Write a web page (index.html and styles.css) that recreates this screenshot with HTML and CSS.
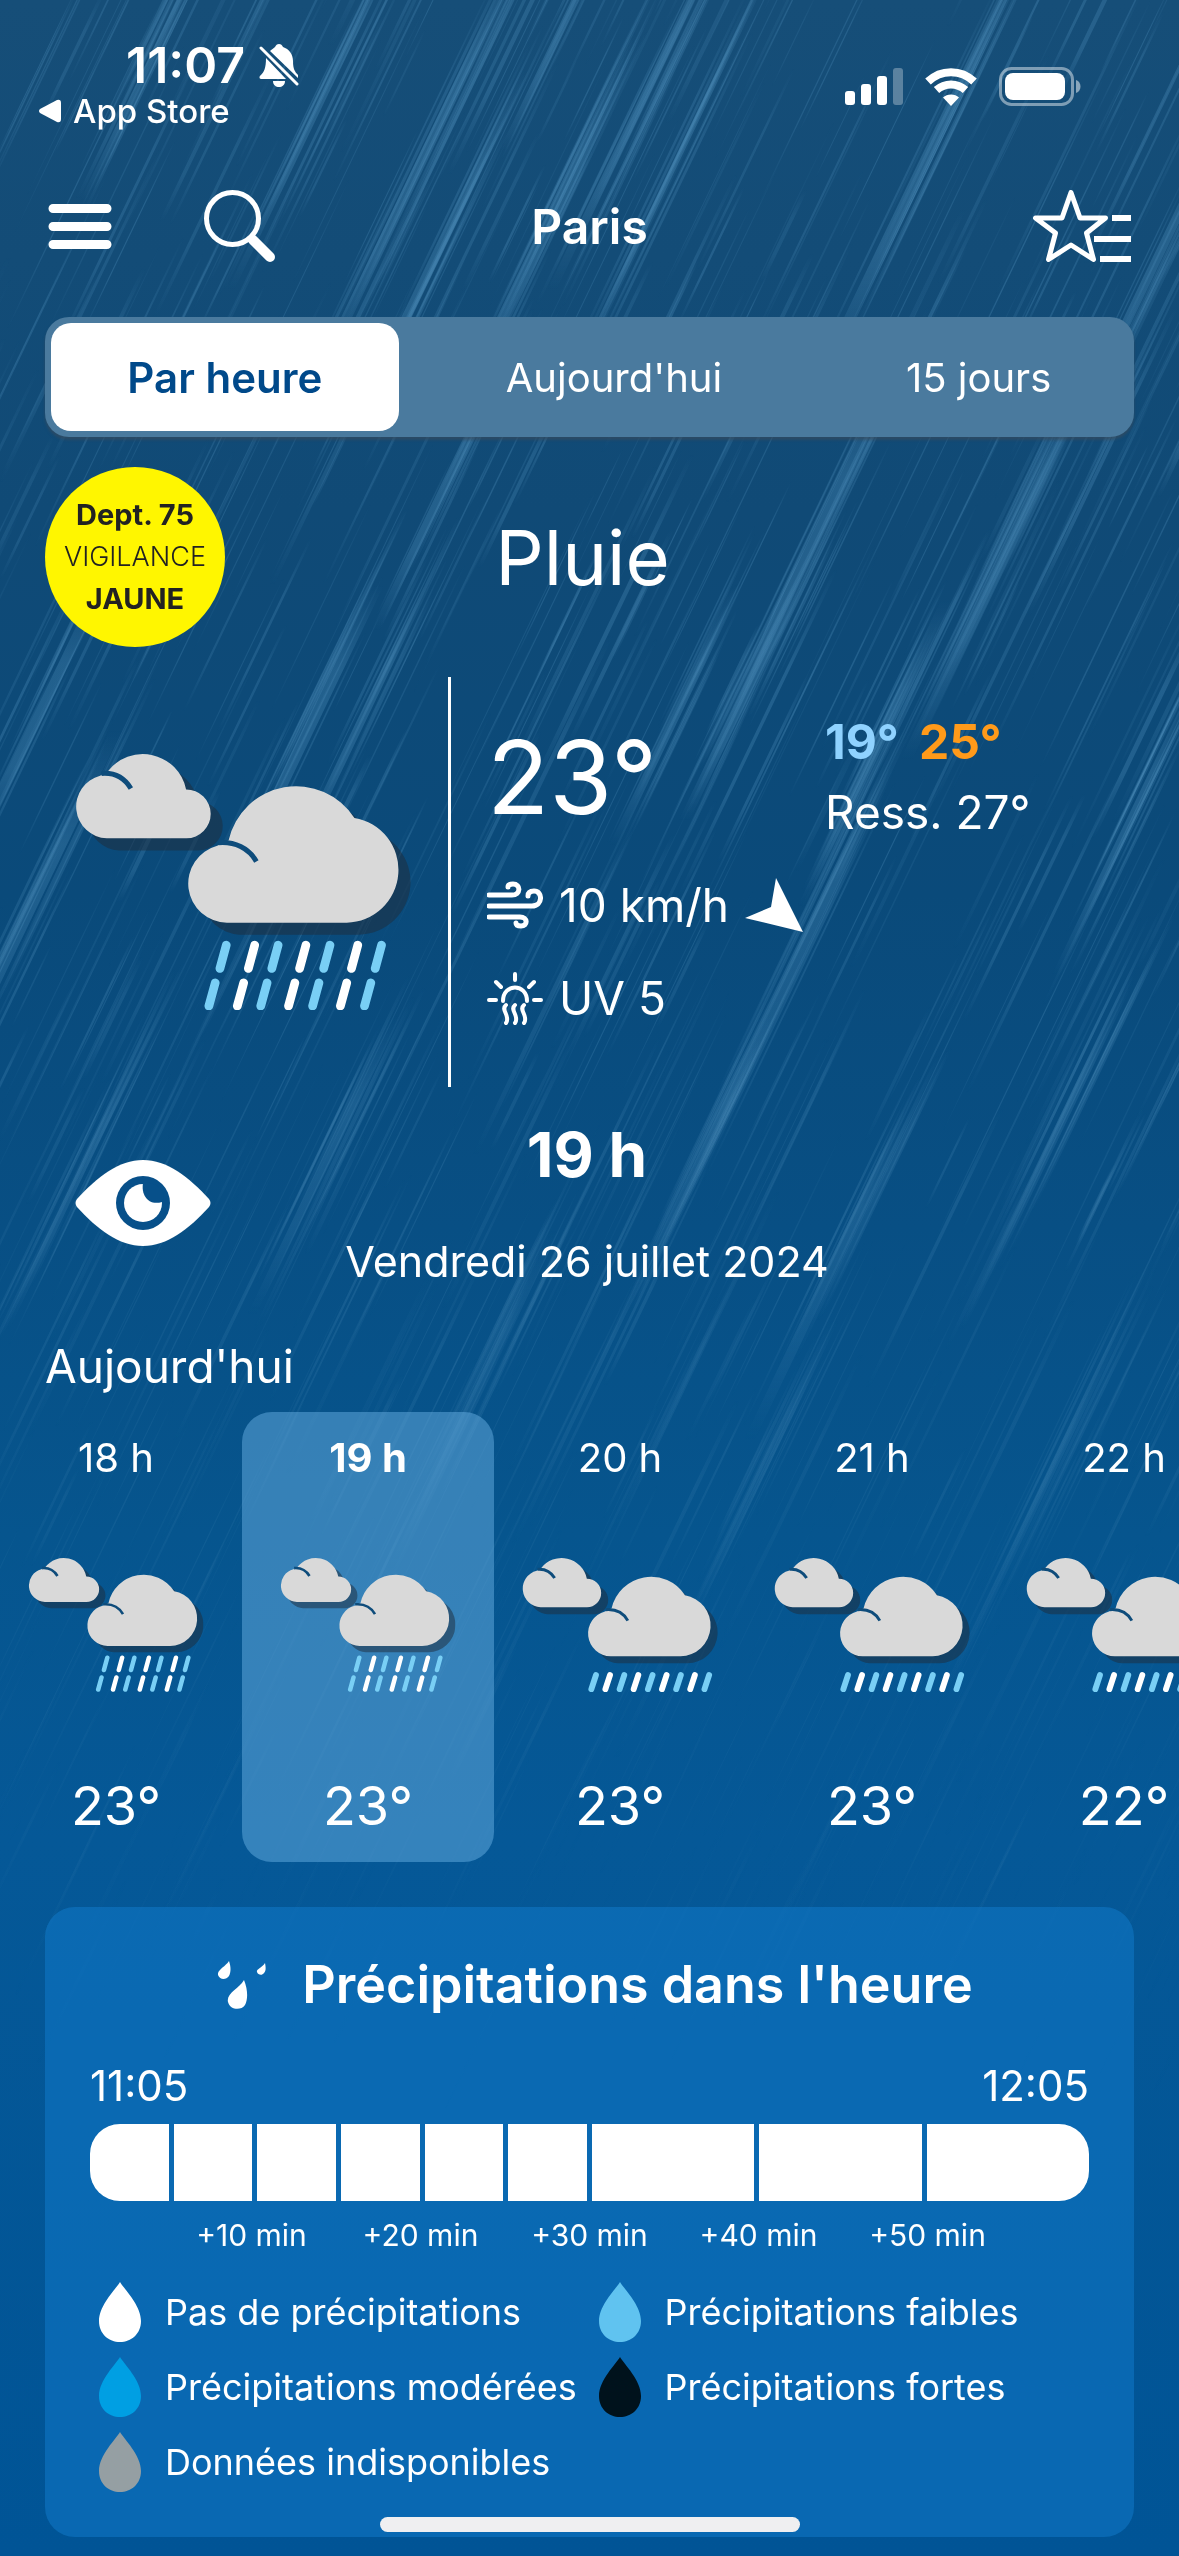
FILE: index.html
```html
<!DOCTYPE html>
<html lang="fr">
<head>
    <meta charset="UTF-8">
    <meta name="viewport" content="width=device-width, initial-scale=1.0">
    <title>Paris - Par heure</title>
    <link rel="stylesheet" href="styles.css">
</head>
<body>
    <!-- shared drawings -->
    <svg class="defs" width="0" height="0" aria-hidden="true">
        <symbol id="clouds" viewBox="225 279 1004 767">
            <g class="shadow" transform="translate(36 36)">
                <path d="M320 531H558A73 73 0 0 0 557 385A132 132 0 0 0 322 332L300 344A95 95 0 0 0 320 531Z"/>
                <path d="M679 783H1037A157.6 157.6 0 0 0 1060 470A207 207 0 0 0 684 537L650 555A117 117 0 0 0 679 783Z"/>
            </g>
            <g class="cloud">
                <path d="M320 531H558A73 73 0 0 0 557 385A132 132 0 0 0 322 332L300 344A95 95 0 0 0 320 531Z"/>
                <path d="M679 783H1037A157.6 157.6 0 0 0 1060 470A207 207 0 0 0 684 537L650 553A117 117 0 0 0 679 783Z"/>
            </g>
            <g class="cut">
                <path d="M304 337C340 334 372 349 392 382"/>
                <path d="M654 544C702 540 744 560 767 600"/>
            </g>
        </symbol>
        <symbol id="rain-strong" viewBox="225 279 1004 767">
            <use href="#clouds" x="225" y="279" width="1004" height="767"/>
            <g class="drops" stroke-width="26">
                <path class="blue" d="M677 850l-19 70M832 850l-19 70M987 850l-19 70M1141 850l-19 70M644 963l-19 69M799 963l-19 69M954 963l-19 69M1109 963l-19 69"/>
                <path class="white" d="M762 850l-19 70M915 850l-19 70M1070 850l-19 70M729 963l-19 69M882 963l-19 69M1037 963l-19 69"/>
            </g>
        </symbol>
        <symbol id="rain-light" viewBox="225 279 1004 687">
            <use href="#clouds" x="225" y="279" width="1004" height="767"/>
            <g class="drops" stroke-width="30">
                <path class="blue" d="M604 879l-24 73M749 879l-24 73M894 879l-24 73M1039 879l-24 73M1184 879l-24 73"/>
                <path class="white" d="M676 879l-24 73M821 879l-24 73M966 879l-24 73M1111 879l-24 73"/>
            </g>
        </symbol>
        <symbol id="drop" viewBox="0 0 42 60">
            <path d="M21 0C25 7 42 23 42 39C42 52 32 60 21 60C10 60 0 52 0 39C0 23 17 7 21 0Z"/>
        </symbol>
    </svg>

    <canvas class="rain" id="rain"></canvas>

    <header class="status">
        <div class="status-left">
            <div class="clock">
                11:07
                <svg width="40" height="43" viewBox="0 0 40 43">
                    <path fill="#fff" d="M11 7C13 5 15 4 16 3C17 1 18 0 20 0C22 0 23 1 24 3C30 5 34 10 34 17C34 25 36 28 39 31V34Z"/>
                    <path fill="#fff" d="M7 14L27 35H2C0 35 0 32 2 31C5 28 7 24 7 14ZM14 37H26C26 41 23 43 20 43C17 43 14 41 14 37Z"/>
                    <path stroke="#fff" stroke-width="3" stroke-linecap="round" d="M2 4L38 40"/>
                </svg>
            </div>
            <a class="back" href="#">
                <svg width="22" height="24" viewBox="0 0 22 24"><path fill="#fff" d="M1 10L18 1Q22 0 22 4V20Q22 24 18 23L1 14Q-1 12 1 10Z"/></svg>
                App Store
            </a>
        </div>
        <div class="status-right">
            <svg width="58" height="38" viewBox="0 0 58 38" fill="#fff">
                <rect x="0" y="23" width="10" height="14" rx="3"/>
                <rect x="16" y="16" width="10" height="21" rx="3"/>
                <rect x="32" y="8" width="10" height="29" rx="3"/>
                <rect x="48" y="0" width="10" height="37" rx="3" opacity=".3"/>
            </svg>
            <svg width="52" height="38" viewBox="0 0 52 38" fill="none" stroke="#fff">
                <path stroke-width="8" d="M3 13.500C16 1 36 1 49 13.500"/>
                <path stroke-width="8" d="M11.500 22C20 14.500 32 14.500 40.500 22"/>
                <path fill="#fff" stroke="none" d="M26 38L18 29.500C22 25.500 30 25.500 34 29.500Z"/>
            </svg>
            <svg width="83" height="40" viewBox="0 0 83 40">
                <rect x="1.500" y="1.500" width="72" height="36" rx="11" fill="none" stroke="#fff" stroke-width="3" opacity=".45"/>
                <rect x="6" y="6" width="60" height="27" rx="8" fill="#fff"/>
                <path fill="#fff" opacity=".5" d="M77 13C83 15 83 24 77 26Z"/>
            </svg>
        </div>
    </header>

    <nav class="nav">
        <div class="nav-left">
            <button type="button" aria-label="Menu">
                <svg width="64" height="72" viewBox="0 0 64 72"><path stroke="#fff" stroke-width="9" stroke-linecap="round" d="M5 18.500H59M5 36.500H59M5 54.500H59"/></svg>
            </button>
            <button type="button" aria-label="Rechercher">
                <svg width="72" height="72" viewBox="0 0 72 72" fill="none" stroke="#fff">
                    <circle cx="28.500" cy="28.500" r="26" stroke-width="5"/>
                    <path stroke-width="10" stroke-linecap="round" d="M49 50L66 67"/>
                </svg>
            </button>
        </div>
        <h1>Paris</h1>
        <div class="nav-right">
            <button type="button" aria-label="Favoris">
                <svg width="98" height="72" viewBox="0 0 98 72" fill="none" stroke="#fff">
                    <path stroke-width="5" stroke-linejoin="round" d="M38 2.500L47 28H72.500L53.500 43L60.500 69.500L38 55L15.500 69.500L22.500 43L2.500 28H29Z"/>
                    <path stroke-width="6" d="M79 28H98M61 49H98M67 69H98"/>
                </svg>
            </button>
        </div>
    </nav>

    <div class="tabs" role="tablist">
        <button class="tab active" type="button" role="tab" aria-selected="true">Par heure</button>
        <button class="tab" type="button" role="tab">Aujourd'hui</button>
        <button class="tab" type="button" role="tab">15 jours</button>
    </div>

    <main>
        <section class="summary">
            <a class="vigilance" href="#">
                <strong>Dept. 75</strong>
                <span>VIGILANCE</span>
                <strong>JAUNE</strong>
            </a>
            <h2>Pluie</h2>
        </section>

        <section class="now">
            <div class="now-icon">
                <svg viewBox="225 279 1004 767"><use href="#rain-strong" x="225" y="279" width="1004" height="767"/></svg>
            </div>
            <div class="now-data">
                <div class="measures">
                    <div class="temp">23°</div>
                    <div class="measure">
                        <svg width="56" height="48" viewBox="0 0 56 48" fill="none" stroke="#fff" stroke-width="5" stroke-linecap="round">
                            <path d="M2 14H25C34 14 34 3 26 3C23 3 21 4 21 6"/>
                            <path d="M2 25H45C56 25 56 10 47 10C43 10 41 12 41 15"/>
                            <path d="M2 36H33C41 36 41 45 34 45C31 45 29 44 29 42"/>
                        </svg>
                        <span>10 km/h</span>
                        <svg width="58" height="54" viewBox="0 0 58 54"><path fill="#fff" d="M31 0L58 54L0 40L26 29Z"/></svg>
                    </div>
                    <div class="measure">
                        <svg width="56" height="53" viewBox="0 0 56 53" fill="none" stroke="#fff" stroke-width="4" stroke-linecap="round">
                            <path d="M2 28H9M47 28H54M28 2V8M9 10L14 15M47 10L42 15"/>
                            <path d="M16 29C16 11 40 11 40 29"/>
                            <path d="M19 33C13 38 24 44 19 51M28 33C22 38 33 44 28 51M37 33C31 38 42 44 37 51"/>
                        </svg>
                        <span>UV 5</span>
                    </div>
                </div>
                <div class="range">
                    <div class="minmax"><span class="min">19°</span><span class="max">25°</span></div>
                    <div>Ress. 27°</div>
                </div>
            </div>
        </section>

        <section class="moment">
            <button class="eye" type="button" aria-label="Observer">
                <svg width="136" height="88" viewBox="0 0 136 88">
                    <path fill="#fff" d="M2 40C22 18 44 1 68 1C92 1 114 18 134 40Q137 44 134 48C114 70 92 87 68 87C44 87 22 70 2 48Q-1 44 2 40Z"/>
                    <circle cx="68" cy="44" r="27" fill="#07508a"/>
                    <circle cx="68" cy="44" r="19" fill="#fff"/>
                    <path fill="#07508a" d="M68 24C66 36 73 47 87 43C93 33 82 22 68 24Z"/>
                </svg>
            </button>
            <div class="date">
                <h3>19 h</h3>
                <p>Vendredi 26 juillet 2024</p>
            </div>
        </section>

        <h4 class="day">Aujourd'hui</h4>
        <div class="hours">
            <button class="hour" type="button">
                <span class="hour-label">18 h</span>
                <svg class="strong" viewBox="225 279 1004 767"><use href="#rain-strong" x="225" y="279" width="1004" height="767"/></svg>
                <span class="hour-temp">23°</span>
            </button>
            <button class="hour selected" type="button">
                <span class="hour-label">19 h</span>
                <svg class="strong" viewBox="225 279 1004 767"><use href="#rain-strong" x="225" y="279" width="1004" height="767"/></svg>
                <span class="hour-temp">23°</span>
            </button>
            <button class="hour" type="button">
                <span class="hour-label">20 h</span>
                <svg class="light" viewBox="225 279 1004 687"><use href="#rain-light" x="225" y="279" width="1004" height="687"/></svg>
                <span class="hour-temp">23°</span>
            </button>
            <button class="hour" type="button">
                <span class="hour-label">21 h</span>
                <svg class="light" viewBox="225 279 1004 687"><use href="#rain-light" x="225" y="279" width="1004" height="687"/></svg>
                <span class="hour-temp">23°</span>
            </button>
            <button class="hour" type="button">
                <span class="hour-label">22 h</span>
                <svg class="light" viewBox="225 279 1004 687"><use href="#rain-light" x="225" y="279" width="1004" height="687"/></svg>
                <span class="hour-temp">22°</span>
            </button>
        </div>

        <section class="card">
            <h3>
                <svg width="48" height="48" viewBox="0 0 48 48" fill="#fff">
                    <path d="M11 0C13 6 13 11 11 15C8 19 2 19 0 14C-1 9 7 6 11 0Z"/>
                    <path d="M26 19C30 29 30 38 27 44C23 50 12 49 10 41C8 32 21 28 26 19Z"/>
                    <path d="M47 2C48 7 48 10 46 12C44 15 40 14 39 11C38 8 44 7 47 2Z"/>
                </svg>
                Précipitations dans l'heure
            </h3>
            <div class="times"><span>11:05</span><span>12:05</span></div>
            <div class="bar">
                <i></i><i></i><i></i><i></i><i></i><i></i>
                <i class="wide"></i><i class="wide"></i><i class="wide"></i>
            </div>
            <div class="steps">
                <span>+10 min</span><span>+20 min</span><span>+30 min</span><span>+40 min</span><span>+50 min</span>
            </div>
            <ul class="legend">
                <li class="none"><svg><use href="#drop"/></svg>Pas de précipitations</li>
                <li class="weak"><svg><use href="#drop"/></svg>Précipitations faibles</li>
                <li class="medium"><svg><use href="#drop"/></svg>Précipitations modérées</li>
                <li class="heavy"><svg><use href="#drop"/></svg>Précipitations fortes</li>
                <li class="unknown"><svg><use href="#drop"/></svg>Données indisponibles</li>
            </ul>
        </section>
    </main>

    <div class="home-bar"></div>
    <script src="rain.js"></script>
</body>
</html>
```
FILE: styles.css
```css
*{
    margin: 0;
    padding: 0;
    box-sizing: border-box;
}
body{
    position: relative;
    min-height: 100vh;
    padding-bottom: 19px;
    overflow-x: hidden;
    font-family: Inter, "Liberation Sans", sans-serif;
    color: white;
    background: linear-gradient(#164e78 0%, #104a76 20%, #0a4a7a 35%, #084f84 48%, #06558e 60%, #055897 72%, #005496 100%);
}
button{
    border: 0;
    background: none;
    color: inherit;
    font-family: inherit;
}
a{
    color: inherit;
    text-decoration: none;
}
svg{
    display: block;
    flex-shrink: 0;
}
.defs{
    position: absolute;
}
.rain{
    position: absolute;
    top: 0;
    left: 0;
    width: 100%;
    height: 100%;
    z-index: -1;
}
.shadow{
    fill: rgb(32, 44, 58);
    opacity: .5;
}
.cloud{
    fill: #d9d9d9;
}
.cut{
    fill: none;
    stroke: #0e4c7b;
    stroke-width: 15;
}
.drops{
    fill: none;
    stroke-linecap: round;
}
.blue{
    stroke: #79cff5;
}
.white{
    stroke: white;
}

/* status bar */
.status{
    display: flex;
    justify-content: space-between;
    align-items: flex-end;
    padding: 37px 97px 0 39px;
}
.clock{
    display: flex;
    align-items: center;
    gap: 14px;
    padding-left: 87px;
    font-size: 50px;
    font-weight: 600;
    line-height: 56px;
}
.back{
    display: flex;
    align-items: center;
    gap: 12px;
    font-size: 33px;
    font-weight: 500;
    line-height: 36px;
}
.status-right{
    display: flex;
    align-items: center;
    gap: 22px;
    padding-bottom: 22px;
}

/* top navigation */
.nav{
    display: grid;
    grid-template-columns: 1fr auto 1fr;
    align-items: center;
    margin-top: 61px;
    padding: 0 48px;
}
.nav-left{
    display: flex;
    gap: 92px;
}
.nav-right{
    display: flex;
    justify-content: flex-end;
}
.nav h1{
    font-size: 48px;
    font-weight: 600;
}
.tabs{
    display: grid;
    grid-template-columns: 348fr 431fr 299fr;
    height: 120px;
    margin: 55px 45px 0;
    padding: 6px;
    border-radius: 24px;
    background: #4a7a9e;
    box-shadow: 0 3px 3px rgba(60, 75, 90, .6);
}
.tab{
    border-radius: 20px;
    font-size: 40px;
}
.tab.active{
    background: white;
    color: #00498a;
    font-size: 42px;
    font-weight: 600;
}

/* weather label */
.summary{
    display: grid;
    grid-template-columns: 180px 1fr 194px;
    align-items: center;
    margin: 30px 45px 0;
}
.vigilance{
    display: flex;
    flex-direction: column;
    align-items: center;
    justify-content: center;
    height: 180px;
    border-radius: 50%;
    background: #fff600;
    color: #222;
    font-size: 29px;
    line-height: 42px;
}
.vigilance span{
    font-size: 27px;
    font-weight: 300;
}
.summary h2{
    text-align: center;
    font-size: 76px;
    font-weight: 400;
}

/* current conditions */
.now{
    display: grid;
    grid-template-columns: 403px 1fr;
    margin: 30px 45px 0;
}
.now-icon{
    display: flex;
    align-items: center;
    justify-content: center;
    padding-right: 8px;
}
.now-icon svg{
    width: 336px;
}
.now-data{
    display: grid;
    grid-template-columns: 338px 1fr;
    min-height: 410px;
    padding-left: 36px;
    border-left: 3px solid white;
    font-size: 46px;
}
.measures{
    display: flex;
    flex-direction: column;
    gap: 33px;
    padding-top: 35px;
}
.temp{
    font-size: 102px;
    line-height: 130px;
}
.measure{
    display: flex;
    align-items: center;
    gap: 16px;
    line-height: 60px;
    white-space: nowrap;
}
.range{
    padding-top: 30px;
    line-height: 70px;
}
.minmax{
    display: flex;
    gap: 20px;
    font-size: 48px;
    font-weight: 700;
}
.min{
    color: #8fd2ff;
}
.max{
    color: #ff9a1a;
}

/* selected hour */
.moment{
    display: grid;
    grid-template-columns: 1fr auto 1fr;
    align-items: center;
    margin-top: 30px;
    padding: 0 80px 0 75px;
}
.eye{
    justify-self: start;
}
.date{
    text-align: center;
}
.date h3{
    font-size: 62px;
    line-height: 76px;
}
.date p{
    margin-top: 40px;
    font-size: 43px;
    line-height: 56px;
}
.day{
    margin: 47px 45px 0;
    font-size: 46px;
    font-weight: 400;
    line-height: 60px;
}
.hours{
    display: flex;
    margin: 16px 0 0 -10px;
    overflow: hidden;
}
.hour{
    flex: 0 0 252px;
    display: flex;
    flex-direction: column;
    align-items: center;
    padding: 22px 0 24px;
    border-radius: 30px;
}
.hour.selected{
    background: rgba(101, 173, 226, .5);
}
.hour.selected .hour-label{
    font-weight: 700;
}
.hour-label{
    font-size: 40px;
    line-height: 48px;
}
.hour svg{
    height: 134px;
    margin: 76px 0 82px;
}
.strong{
    width: 176px;
}
.light{
    width: 196px;
}
.hour-temp{
    font-size: 54px;
    line-height: 64px;
}

/* next hour card */
.card{
    margin: 45px 45px 0;
    padding: 46px 45px 38px;
    border-radius: 30px;
    background: rgba(17, 123, 203, .52);
}
.card h3{
    display: flex;
    align-items: center;
    justify-content: center;
    gap: 36px;
    padding-left: 12px;
    font-size: 52px;
    font-weight: 600;
    line-height: 64px;
}
.times{
    display: flex;
    justify-content: space-between;
    margin-top: 45px;
    font-size: 42px;
    line-height: 48px;
}
.bar{
    display: grid;
    grid-template-columns: repeat(12, 1fr);
    gap: 5px;
    height: 77px;
    margin-top: 14px;
    border-radius: 30px;
    overflow: hidden;
}
.bar i{
    background: white;
}
.bar .wide{
    grid-column: span 2;
}
.steps{
    display: grid;
    grid-template-columns: repeat(5, 1fr);
    margin-top: 16px;
    padding: 0 77px;
    text-align: center;
    font-size: 30px;
    line-height: 36px;
}
.legend{
    display: grid;
    grid-template-columns: 1fr 1fr;
    grid-auto-rows: 75px;
    margin-top: 21px;
    list-style: none;
    font-size: 36px;
}
.legend li{
    display: flex;
    align-items: center;
    gap: 24px;
    padding-left: 9px;
    white-space: nowrap;
}
.legend svg{
    width: 42px;
    height: 60px;
}
.none svg{
    fill: white;
}
.weak svg{
    fill: #60c3f0;
}
.medium svg{
    fill: #009fe3;
}
.heavy svg{
    fill: #00121c;
}
.unknown svg{
    fill: #959fa3;
}
.home-bar{
    position: fixed;
    bottom: 24px;
    left: 50%;
    width: 420px;
    height: 15px;
    margin-left: -210px;
    border-radius: 8px;
    background: #efeff1;
}
```
FILE: rain.js
```js
var canvas = document.getElementById("rain");
var ctx = canvas.getContext("2d");
canvas.width = document.body.clientWidth;
canvas.height = document.body.clientHeight;

// big streaks: x, y of the top end, height, width
var streaks = [
  [497, 0, 300, 11], [600, 110, 220, 12], [490, 140, 180, 10], [370, 0, 200, 7], [180, 0, 110, 6],
  [1000, 0, 300, 11], [690, 0, 200, 9], [740, 30, 270, 6], [1179, 210, 110, 10], [575, 0, 60, 8],
  [865, 430, 240, 12], [1062, 430, 240, 12], [466, 440, 100, 9], [66, 655, 100, 11], [80, 800, 220, 12],
  [342, 655, 120, 12], [392, 655, 110, 9], [870, 800, 300, 12], [911, 670, 130, 12], [1161, 755, 130, 9],
  [704, 655, 100, 9], [764, 650, 80, 11], [735, 1085, 130, 11], [872, 1180, 170, 11], [361, 1085, 140, 9],
  [115, 1100, 140, 8], [1100, 1040, 200, 7], [520, 1300, 180, 8], [800, 1390, 150, 9], [1090, 1390, 220, 8]
];

// small seeded generator so that the rain is the same on each load
var seed = 75;
function random() {
  seed = (seed * 16807) % 2147483647;
  return seed / 2147483647;
}

function fade(y) {
  return Math.max(0, Math.min(1, (2050 - y) / 1200));
}

function streak(x, y, h, w, alpha) {
  var color = "rgba(80, 144, 188, ";
  var gradient = ctx.createLinearGradient(0, y, 0, y + h);
  gradient.addColorStop(0, color + "0)");
  gradient.addColorStop(0.3, color + alpha * fade(y) + ")");
  gradient.addColorStop(0.7, color + alpha * fade(y + h) + ")");
  gradient.addColorStop(1, color + "0)");
  ctx.fillStyle = gradient;
  ctx.beginPath();
  ctx.moveTo(x, y);
  ctx.lineTo(x + w, y);
  ctx.lineTo(x + w - h * 0.48, y + h);
  ctx.lineTo(x - h * 0.48, y + h);
  ctx.fill();
}

streaks.forEach(function (s) {
  streak(s[0] + 30, s[1] - 70, s[2] + 160, s[3], 0.32);
  for (var i = 0; i < 9; i++) {
    var shift = (random() - 0.5) * 160;
    streak(s[0] + 30 + random() * 30 - 10 - shift * 0.48, s[1] - 70 + shift, s[2] + 100, 1 + random() * 3, 0.25);
  }
});

for (var i = 0; i < 1000; i++) {
  var x = random() * (canvas.width + 150);
  var y = random() * 2100 - 200;
  streak(x, y, 80 + random() * 260, 1 + random() * random() * 5, 0.1 + random() * 0.22);
}
```
